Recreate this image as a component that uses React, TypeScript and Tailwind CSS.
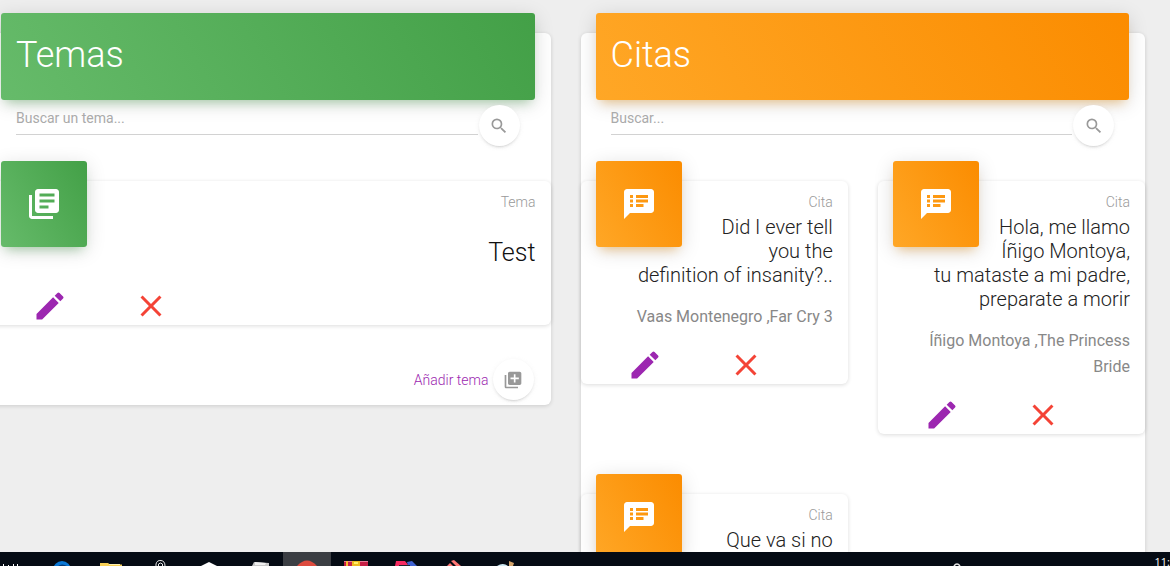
import type { ReactNode } from "react";
import {
  MdClose,
  MdEdit,
  MdLibraryAdd,
  MdLibraryBooks,
  MdSearch,
  MdSpeakerNotes,
} from "react-icons/md";

type Tone = "green" | "orange";

const toneClass: Record<Tone, string> = {
  green:
    "bg-[linear-gradient(60deg,#66bb6a,#43a047)] shadow-[0_4px_20px_0_rgba(0,0,0,0.14),0_7px_10px_-5px_rgba(76,175,80,0.4)]",
  orange:
    "bg-[linear-gradient(60deg,#ffa726,#fb8c00)] shadow-[0_4px_20px_0_rgba(0,0,0,0.14),0_7px_10px_-5px_rgba(255,152,0,0.4)]",
};

const roundButton =
  "flex size-[41px] shrink-0 items-center justify-center rounded-full bg-white text-[#999999] shadow-[0_2px_2px_0_rgba(153,153,153,0.14),0_3px_1px_-2px_rgba(153,153,153,0.2),0_1px_5px_0_rgba(153,153,153,0.12)]";

function Panel({ tone, title, placeholder, children }: { tone: Tone; title: string; placeholder: string; children: ReactNode }) {
  return (
    <section className="min-w-0 rounded-md bg-white shadow-[0_1px_4px_0_rgba(0,0,0,0.14)]">
      <header className={`mr-4 ml-[15px] -mt-5 rounded-[3px] px-[15px] pt-[15px] pb-[18px] ${toneClass[tone]}`}>
        <h1 className="text-[36px] leading-[54px] font-light text-white">{title}</h1>
      </header>
      <form className="flex items-start gap-px pt-[5px] pr-[31px] pl-[30px]" onSubmit={(e) => e.preventDefault()}>
        <input
          type="text"
          aria-label={placeholder}
          placeholder={placeholder}
          className="h-[30px] min-w-0 flex-1 border-b border-[#d2d2d2] bg-transparent pb-1 text-sm text-[#555555] outline-none placeholder:text-[#aaaaaa]"
        />
        <button type="submit" aria-label="Buscar" className={roundButton}>
          <MdSearch className="size-5" />
        </button>
      </form>
      {children}
    </section>
  );
}

function StatCard({ tone, icon, category, children }: { tone: Tone; icon: ReactNode; category: string; children: ReactNode }) {
  return (
    <article className="rounded-md bg-white pb-px shadow-[0_1px_4px_0_rgba(0,0,0,0.14)]">
      <div className={`float-left mx-[15px] -mt-5 flex size-[86px] items-center justify-center rounded-[3px] text-white ${toneClass[tone]}`}>
        {icon}
      </div>
      <div className="px-[15px] pt-[10px] text-right">
        <p className="text-sm leading-[22px] font-light text-[#999999]">{category}</p>
        {children}
      </div>
      <div className="clear-both flex gap-[65px] pt-[17px] pl-[46px]">
        <button type="button" aria-label="Editar" className="text-[#9c27b0]">
          <MdEdit className="size-9" />
        </button>
        <button type="button" aria-label="Eliminar" className="text-[#f44336]">
          <MdClose className="size-9" />
        </button>
      </div>
    </article>
  );
}

const quotes = [
  { text: "Did I ever tell you the definition of insanity?..", source: "Vaas Montenegro ,Far Cry 3" },
  { text: "Hola, me llamo Íñigo Montoya, tu mataste a mi padre, preparate a morir", source: "Íñigo Montoya ,The Princess Bride" },
  { text: "Que va si no", source: "" },
];

function Taskbar() {
  return (
    <footer className="relative z-10 flex h-[14px] shrink-0 justify-between overflow-hidden bg-[#050b14] text-white">
      <svg width="520" height="14" viewBox="0 0 520 14" aria-hidden="true" className="shrink-0">
        <path d="M3.500 12v2M8.500 13v1M13.500 12v2M17.500 12v2" stroke="#fff" />
        <circle cx="62" cy="18" r="9" fill="#0a78d6" />
        <path d="M58 14q4-3 9 0z" fill="#063a75" />
        <path d="M100 11h8l2 1.500h12V14h-22z" fill="#f7cf55" />
        <path d="M109 12h11v1h-11z" fill="#fff0ac" />
        <path d="M156 14v-2q1-4 5-3.500t4 5.500M158.500 14v-2q2-2 4 0v2" fill="none" stroke="#e8e8e8" />
        <path d="M201 14l8-4 8 4z" fill="#fff" />
        <path d="M254 10l15 1 0 3h-17z" fill="#c8c8c8" />
        <path d="M255 10l11 1-1 2h-10z" fill="#efefef" />
        <path d="M283 0h48v14h-48z" fill="#3b3e43" />
        <path d="M297 14q10-11 20 0z" fill="#dd4b3e" />
        <path d="M344 9h24v5h-24z" fill="#c51f45" />
        <path d="M344 9h24v1h-24z" fill="#e77a97" />
        <path d="M346 9h2v5h-2z" fill="#f5b932" />
        <path d="M352 9h8v5h-8z" fill="#edba20" />
        <path d="M354 10h4v2h-4z" fill="#fff06a" />
        <path d="M396 9h9l4 5h-14z" fill="#f62b61" />
        <path d="M407 10l5-1 5 5h-9z" fill="#3f62d1" />
        <path d="M399 13h11v1h-11z" fill="#22242d" />
        <path d="M451 9l3-1 7 6h-5z" fill="#ff7775" />
        <path d="M447 14l3-3 3 3z" fill="#ff7775" />
        <path d="M497 14q6-4 11 0z" fill="#cce8f2" />
        <path d="M509 9l5 2-1 3h-4z" fill="#d2a269" />
      </svg>
      <div className="flex shrink-0 items-start">
        <svg width="202" height="14" viewBox="0 0 202 14" aria-hidden="true">
          <path d="M1 14q3-4 6 0" fill="none" stroke="#e8e8e8" strokeWidth="1.500" />
        </svg>
        <span className="pt-[2px] font-['Open_Sans',sans-serif] text-[11px] leading-4 whitespace-nowrap">11:</span>
      </div>
    </footer>
  );
}

export default function App() {
  return (
    <div className="flex h-screen flex-col overflow-hidden bg-[#eeeeee] font-[Roboto,sans-serif]">
      <main className="min-h-0 flex-1 overflow-hidden">
        <div className="-ml-[14px] grid grid-cols-2 items-start gap-[30px] pt-[33px] pr-[25px]">
          <Panel tone="green" title="Temas" placeholder="Buscar un tema...">
            <div className="pt-[35px]">
              <StatCard tone="green" category="Tema" icon={<MdLibraryBooks className="size-9" />}>
                <h2 className="pt-[22px] text-[25px] leading-9 font-light text-[#111111]">Test</h2>
              </StatCard>
            </div>
            <div className="flex items-center justify-end gap-1 pt-[34px] pr-[17px] pb-[5px]">
              <a href="#tema" className="text-sm font-light text-[#9c27b0]">Añadir tema</a>
              <button type="button" aria-label="Añadir tema" className={roundButton}>
                <MdLibraryAdd className="size-5" />
              </button>
            </div>
          </Panel>
          <Panel tone="orange" title="Citas" placeholder="Buscar...">
            <div className="grid grid-cols-2 items-start gap-x-[30px] gap-y-[60px] pt-[35px]">
              {quotes.map((quote) => (
                <StatCard key={quote.text} tone="orange" category="Cita" icon={<MdSpeakerNotes className="size-9" />}>
                  <h2 className="pt-[2px] text-xl leading-6 font-light text-[#222222]">{quote.text}</h2>
                  <p className="pt-[17px] text-base leading-[26px] text-[#888888]">{quote.source}</p>
                </StatCard>
              ))}
            </div>
          </Panel>
        </div>
      </main>
      <Taskbar />
    </div>
  );
}
